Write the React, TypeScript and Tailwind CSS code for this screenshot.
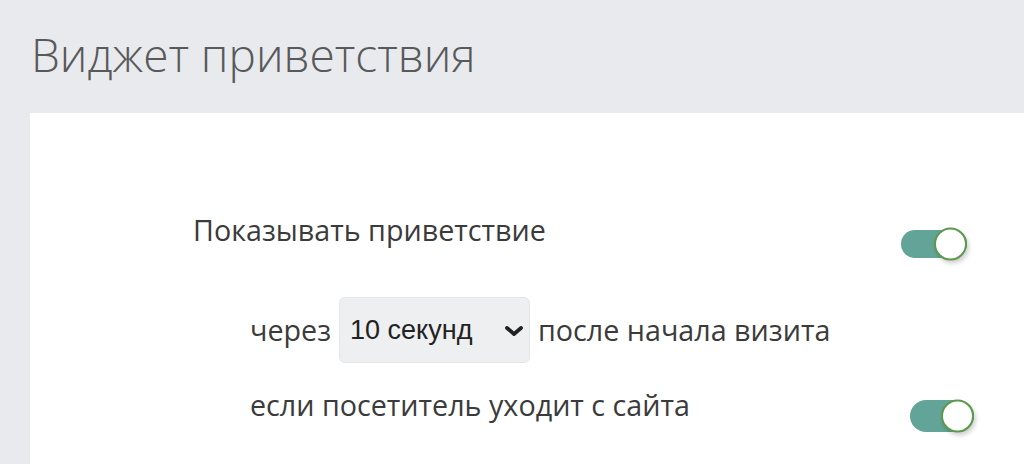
import React from "react";

function Toggle({ trackW, trackH, knob }: { trackW: string; trackH: string; knob: string }) {
  return (
    <div className={`relative ${trackW} ${trackH} rounded-full bg-[#62a497]`}>
      <div
        className={`absolute right-0 top-1/2 -translate-y-1/2 ${knob} rounded-full bg-white border-2 border-[#5b9a4c] shadow-[2px_3px_4px_rgba(0,0,0,0.18)]`}
      />
    </div>
  );
}

export default function App() {
  return (
    <div className="w-[1024px] h-[464px] overflow-hidden bg-[#e9eaed] flex flex-col" style={{ fontFamily: '"Open Sans", sans-serif' }}>
      <div className="h-[113px] shrink-0 pl-[31px] pt-[31px]">
        <h1 className="text-[46px] leading-[46px] font-light text-[#58595b]">Виджет приветствия</h1>
      </div>
      <div className="ml-[30px] flex-1 bg-white pl-[163px] pt-[103px] text-[#3b3b3b]">
        <div className="flex items-start w-[774px] justify-between">
          <span className="text-[28.7px] leading-[28px]">Показывать приветствие</span>
          <div className="mt-[14px]">
            <Toggle trackW="w-[66px]" trackH="h-[28px]" knob="w-[33px] h-[33px]" />
          </div>
        </div>
        <div className="mt-[39px] ml-[57px] flex items-center gap-[8px]">
          <span className="text-[28.7px] leading-[28px]">через</span>
          <div className="relative w-[191px] h-[66px] rounded-[6px] bg-[#eeeff1] border border-[#e4e5e8] flex items-center pl-[10px]">
            <span className="text-[27px] text-[#222]" style={{ fontFamily: '"Liberation Sans", Arial, sans-serif' }}>10 секунд</span>
            <svg className="absolute left-[165px] top-[28px]" width="18" height="10" viewBox="0 0 18 10">
              <polyline points="2,2 9,8 16,2" fill="none" stroke="#222" strokeWidth="3.8" strokeLinecap="round" strokeLinejoin="round" />
            </svg>
          </div>
          <span className="text-[28.7px] leading-[28px]">после начала визита</span>
        </div>
        <div className="mt-[28px] ml-[57px] flex items-start w-[724px] justify-between">
          <span className="text-[28.7px] leading-[28px]">если посетитель уходит с сайта</span>
          <div className="mt-[9px]">
            <Toggle trackW="w-[64px]" trackH="h-[32px]" knob="w-[33px] h-[33px]" />
          </div>
        </div>
      </div>
    </div>
  );
}
